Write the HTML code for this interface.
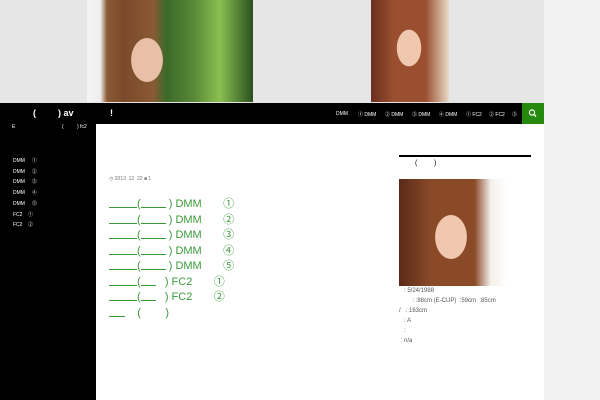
<!DOCTYPE html>
<html><head><meta charset="utf-8"><style>
*{margin:0;padding:0;box-sizing:border-box}
body{width:600px;height:400px;overflow:hidden;background:#f2f2f2;font-family:"Liberation Sans","Noto Sans CJK JP",sans-serif;position:relative}
.abs{position:absolute}
.top{left:0;top:0;width:544px;height:103px;background:#e6e6e6}
.img1{left:87px;top:0;width:166px;height:102px;background:radial-gradient(ellipse 26px 36px at 60px 60px,#e8c0a8 60%,transparent 62%),linear-gradient(90deg,#f4f4f2 0,#eee 8%,#8a5a35 12%,#7a4a2a 22%,#8a5a35 40%,#3a6a28 48%,#5a8a38 65%,#8ac050 80%,#2a5020 100%)}
.img2{left:371px;top:0;width:78px;height:102px;background:radial-gradient(ellipse 20px 30px at 38px 48px,#f0c8b0 60%,transparent 62%),linear-gradient(90deg,#6a3020,#9a5030 30%,#9a5030 70%,#e8dcc8)}
.bar{left:0;top:103px;width:544px;height:21px;background:#000}
.search{left:522px;top:103px;width:22px;height:21px;background:#24890d}
.side{left:0;top:124px;width:96px;height:276px;background:#000}
.content{left:96px;top:124px;width:448px;height:276px;background:#fff}
.w{color:#fff;font-size:5px}
.nav{top:111px;color:#fff;font-size:5px}
.post{left:109px;font-size:11px;color:#3a9a3a;line-height:15.5px}
.post span.u{display:inline-block;border-bottom:1px solid #3a9a3a;height:8px;vertical-align:middle}
.img3{left:399px;top:179px;width:108px;height:107px;background:radial-gradient(ellipse 26px 36px at 52px 58px,#f0c8b0 60%,transparent 62%),linear-gradient(90deg,#5a2a18,#8a4a28 30%,#8a4a28 70%,#f4f0ec 85%,#fff)}
.info{left:399px;font-size:6px;color:#555;line-height:10px}
</style></head><body>
<div class="abs top"></div>
<div class="abs img1"></div>
<div class="abs img2"></div>
<div class="abs bar"></div>
<div class="abs" style="left:33px;top:108px;color:#fff;font-size:9px;font-weight:bold">(</div>
<div class="abs" style="left:58px;top:108px;color:#fff;font-size:9px;font-weight:bold">) av</div>
<div class="abs" style="left:110px;top:108px;color:#fff;font-size:9px;font-weight:bold">!</div>
<div class="abs nav" style="left:336px">DMM</div>
<div class="abs nav" style="left:358px">① DMM</div>
<div class="abs nav" style="left:385px">② DMM</div>
<div class="abs nav" style="left:412px">③ DMM</div>
<div class="abs nav" style="left:439px">④ DMM</div>
<div class="abs nav" style="left:466px">① FC2</div>
<div class="abs nav" style="left:489px">② FC2</div>
<div class="abs nav" style="left:512px">③</div>
<div class="abs search"><svg width="22" height="21"><circle cx="10" cy="9.5" r="2.6" stroke="#fff" stroke-width="1.2" fill="none"/><line x1="12" y1="11.5" x2="14" y2="13.5" stroke="#fff" stroke-width="1.3"/></svg></div>
<div class="abs side"></div>
<div class="abs w" style="left:12px;top:124px">E</div>
<div class="abs w" style="left:62px;top:124px">(</div>
<div class="abs w" style="left:77px;top:124px">) fc2</div>
<div class="abs w" style="left:13px;top:156px;line-height:10.7px">DMM &nbsp;&nbsp;&nbsp;&nbsp;①<br>DMM &nbsp;&nbsp;&nbsp;&nbsp;②<br>DMM &nbsp;&nbsp;&nbsp;&nbsp;③<br>DMM &nbsp;&nbsp;&nbsp;&nbsp;④<br>DMM &nbsp;&nbsp;&nbsp;&nbsp;⑤<br>FC2 &nbsp;&nbsp;&nbsp;①<br>FC2 &nbsp;&nbsp;&nbsp;②</div>
<div class="abs content"></div>
<div class="abs" style="left:109px;top:176px;font-size:5px;color:#777">◷ 2013 &nbsp;12 &nbsp;22 ■ 1</div>
<div class="abs post" style="top:197px">
<div><span class="u" style="width:28px"></span>(<span class="u" style="width:25px"></span> ) DMM &nbsp;&nbsp;&nbsp;&nbsp;&nbsp;&nbsp;①</div>
<div><span class="u" style="width:28px"></span>(<span class="u" style="width:25px"></span> ) DMM &nbsp;&nbsp;&nbsp;&nbsp;&nbsp;&nbsp;②</div>
<div><span class="u" style="width:28px"></span>(<span class="u" style="width:25px"></span> ) DMM &nbsp;&nbsp;&nbsp;&nbsp;&nbsp;&nbsp;③</div>
<div><span class="u" style="width:28px"></span>(<span class="u" style="width:25px"></span> ) DMM &nbsp;&nbsp;&nbsp;&nbsp;&nbsp;&nbsp;④</div>
<div><span class="u" style="width:28px"></span>(<span class="u" style="width:25px"></span> ) DMM &nbsp;&nbsp;&nbsp;&nbsp;&nbsp;&nbsp;⑤</div>
<div><span class="u" style="width:28px"></span>(<span class="u" style="width:15px"></span> &nbsp;&nbsp;) FC2 &nbsp;&nbsp;&nbsp;&nbsp;&nbsp;&nbsp;①</div>
<div><span class="u" style="width:28px"></span>(<span class="u" style="width:15px"></span> &nbsp;&nbsp;) FC2 &nbsp;&nbsp;&nbsp;&nbsp;&nbsp;&nbsp;②</div>
<div><span class="u" style="width:16px"></span> &nbsp;&nbsp;&nbsp;( &nbsp;&nbsp;&nbsp;&nbsp;&nbsp;&nbsp;&nbsp;)</div>
</div>
<div class="abs" style="left:399px;top:155px;width:132px;height:2px;background:#000"></div>
<div class="abs" style="left:415px;top:160px;font-size:7px">(</div>
<div class="abs" style="left:434px;top:160px;font-size:7px">)</div>
<div class="abs img3"></div>
<div class="abs info" style="top:286px">
&nbsp;&nbsp;&nbsp;: 5/24/1988<br>
&nbsp;&nbsp;&nbsp;&nbsp;&nbsp;&nbsp;&nbsp;&nbsp;: :88cm (E-CUP) &nbsp;:59cm &nbsp;:85cm<br>
/ &nbsp;&nbsp;: 163cm<br>
&nbsp;&nbsp;&nbsp;: A<br>
&nbsp;&nbsp;&nbsp;:<br>
&nbsp;: n/a</div>
</body></html>
